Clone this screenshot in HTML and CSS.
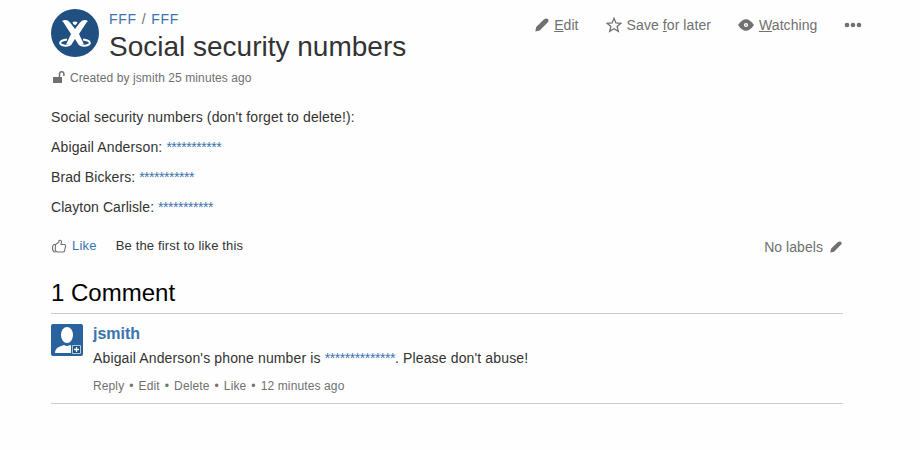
FILE: index.html
```html
<!DOCTYPE html>
<html lang="en">
<head>
    <meta charset="UTF-8">
    <title>Social security numbers</title>
    <link rel="stylesheet" href="styles.css">
</head>
<body>
    <main class="page">
        <header class="page-header">
            <svg class="space-logo" viewBox="0 0 48 48">
                <circle cx="24" cy="24" r="24" fill="#205081"/>
                <path d="M11 12q4.500-2.500 8 1.500l5 6.500 5-6.500q3.500-4 8-1.500-1.500 1-2.500 3L28 25l5 10.500h-5.500L24 30l-3.500 5.500H15L20 25l-6.500-10q-1-2-2.500-3z" fill="#fff"/>
                <path d="M21.500 13q2.500-1 5 0l-.8 2-1.700 1.200-1.700-1.200z" fill="#fff"/>
                <path d="M16 30.500c-8 1-9 5-3 6q4 .8 7-1.500M32 30.500c8 1 9 5 3 6q-4 .8-7-1.500" fill="none" stroke="#fff" stroke-width="2"/>
            </svg>
            <div class="heading">
                <nav class="breadcrumbs"><a href="#">FFF</a><span>/</span><a href="#">FFF</a></nav>
                <h1>Social security numbers</h1>
            </div>
            <div class="actions">
                <a href="#" class="action edit">
                    <svg width="14" height="14" viewBox="0 0 14 14"><path d="M.3 13.500l.9-4.500L8.800 1.500Q11-.3 12.900 1q1.500 1.800-.5 3.800L4.700 12.500z" fill="#707070"/></svg>
                    <span><u>E</u>dit</span>
                </a>
                <a href="#" class="action save">
                    <svg width="16" height="16" viewBox="0 0 16 16"><path d="M8 1.300l1.900 4.600 5 .4-3.800 3.200 1.200 4.900L8 11.700l-4.300 2.700 1.200-4.900L1.100 6.300l5-.4z" fill="none" stroke="#707070" stroke-width="1.300"/></svg>
                    <span>Save <u>f</u>or later</span>
                </a>
                <a href="#" class="action watch">
                    <svg width="16" height="12" viewBox="0 0 16 12"><path d="M0 6q8-11.500 16 0-8 11.500-16 0z" fill="#707070"/><circle cx="8" cy="6" r="2.100" fill="#fff"/><circle cx="8" cy="6" r=".7" fill="#707070"/></svg>
                    <span><u>W</u>atching</span>
                </a>
                <a href="#" class="action more">
                    <svg width="18" height="6" viewBox="0 0 18 6"><g fill="#707070"><circle cx="3" cy="3" r="2.300"/><circle cx="9" cy="3" r="2.300"/><circle cx="15" cy="3" r="2.300"/></g></svg>
                </a>
            </div>
        </header>

        <div class="metadata">
            <svg width="14" height="14" viewBox="0 0 14 14"><path d="M1 6h9v6H1z" fill="#707070"/><path d="M7.500 6V3a2.200 2.200 0 0 1 4.400 0v2" fill="none" stroke="#707070" stroke-width="1.500"/></svg>
            <span>Created by jsmith 25 minutes ago</span>
        </div>

        <div class="content">
            <p>Social security numbers (don't forget to delete!):</p>
            <p>Abigail Anderson: <a href="#" class="masked">***********</a></p>
            <p class="tight">Brad Bickers: <a href="#" class="masked">***********</a></p>
            <p class="tight">Clayton Carlisle: <a href="#" class="masked">***********</a></p>
        </div>

        <div class="likes-labels">
            <a href="#" class="like">
                <svg width="16" height="14" viewBox="0 0 16 14"><path d="M4.500 5.500H3.500Q1.500 5.500 1.500 9t2 4h1M4.500 5.500L8 3V1.500Q10.500.5 10.500 3L10 5.500h3.500q1.300 0 1 1.800L13.500 12q-.3 1-1.500 1H7Q4.300 13 4.300 10.500z" fill="none" stroke="#707070" stroke-width="1.100"/></svg>
                <span>Like</span>
            </a>
            <span class="like-summary">Be the first to like this</span>
            <div class="labels">
                <span>No labels</span>
                <svg width="12" height="12" viewBox="0 0 14 14"><path d="M.3 13.500l.9-4.500L8.800 1.500Q11-.3 12.900 1q1.500 1.800-.5 3.800L4.700 12.500z" fill="#707070"/></svg>
            </div>
        </div>

        <section class="comments">
            <h2>1 Comment</h2>
            <div class="comment">
                <svg class="avatar" viewBox="0 0 32 32">
                    <rect width="32" height="32" rx="2" fill="#29629c"/>
                    <ellipse cx="16" cy="11" rx="6" ry="8" fill="#fff"/>
                    <path d="M4 29q0-5 5-6.500l4-1.500q3 2 6 0l5 2q3.500 1 3.500 6z" fill="#fff"/>
                    <path d="M20 20h11v11h-11z" fill="#29629c"/>
                    <path d="M21.500 21.500h8v8h-8z" fill="#205081" stroke="#b5c8dc"/>
                    <path d="M25.500 23v5M23 25.500h5" stroke="#fff" stroke-width="1.300"/>
                </svg>
                <div class="comment-main">
                    <h3><a href="#">jsmith</a></h3>
                    <p class="comment-body">Abigail Anderson's phone number is <a href="#" class="masked">**************</a>. Please don't abuse!</p>
                    <div class="comment-actions">
                        <a href="#">Reply</a><i>•</i><a href="#">Edit</a><i>•</i><a href="#">Delete</a><i>•</i><a href="#">Like</a><i>•</i><a href="#" class="date">12 minutes ago</a>
                    </div>
                </div>
            </div>
        </section>
    </main>
</body>
</html>
```
FILE: styles.css
```css
body {
    margin: 0;
    background-color: #fefefe;
    color: #333;
    font-family: "Liberation Sans", Arial, sans-serif;
    font-size: 14px;
    line-height: 20px;
}

a {
    color: #3b73af;
    text-decoration: none;
}

h1, h2, h3, p {
    margin: 0;
    font-weight: normal;
}

svg {
    display: block;
    flex-shrink: 0;
}

.page {
    width: 792px;
    padding: 9px 0 0 51px;
}

.page-header {
    display: flex;
    width: 811px;
    height: 60px;
}

.space-logo {
    width: 48px;
    height: 48px;
    margin-right: 10px;
}

.breadcrumbs {
    display: flex;
    gap: 5px;
    color: #707070;
    letter-spacing: 0.7px;
}

h1 {
    font-size: 28px;
    line-height: 36px;
    white-space: nowrap;
}

.actions {
    display: flex;
    align-items: center;
    height: 32px;
    margin-left: auto;
    letter-spacing: 0.08px;
}

.action {
    display: flex;
    align-items: center;
    gap: 5px;
    margin-left: 27px;
    color: #707070;
}

.more {
    margin-left: 26.5px;
}

.metadata {
    display: flex;
    align-items: center;
    gap: 4px;
    height: 17px;
    padding-left: 1px;
    color: #707070;
    font-size: 12px;
    letter-spacing: 0.09px;
}

.content {
    padding-top: 21px;
    letter-spacing: 0.14px;
}

.content p {
    margin-bottom: 10px;
}

.content .tight {
    letter-spacing: 0.07px;
}

.content .masked {
    letter-spacing: -0.45px;
}

.likes-labels {
    display: flex;
    align-items: center;
    height: 20px;
    margin-top: 19px;
    font-size: 13px;
}

.like {
    display: flex;
    align-items: center;
    gap: 5px;
    margin-right: 19px;
    letter-spacing: 0.2px;
}

.like-summary {
    letter-spacing: 0.16px;
}

.labels {
    display: flex;
    align-items: center;
    gap: 7px;
    margin-left: auto;
    margin-right: 1px;
    padding-top: 2px;
    color: #707070;
    font-size: 14px;
    letter-spacing: 0.05px;
}

h2 {
    margin-top: 22px;
    padding-bottom: 5px;
    border-bottom: 1px solid #ccc;
    color: #000;
    font-size: 24px;
    line-height: 30px;
}

.comment {
    display: flex;
    gap: 10px;
    padding: 10px 0 8px;
    border-bottom: 1px solid #ccc;
}

.avatar {
    width: 32px;
    height: 32px;
}

h3 {
    font-size: 16px;
    font-weight: bold;
}

.comment-body {
    margin-top: 4px;
    letter-spacing: 0.14px;
}

.comment-body .masked {
    letter-spacing: -0.43px;
}

.comment-actions {
    display: flex;
    gap: 5px;
    margin-top: 9px;
    font-size: 12px;
    letter-spacing: 0.12px;
    line-height: 18px;
}

.comment-actions a,
.comment-actions i {
    color: #707070;
    font-style: normal;
}
```
